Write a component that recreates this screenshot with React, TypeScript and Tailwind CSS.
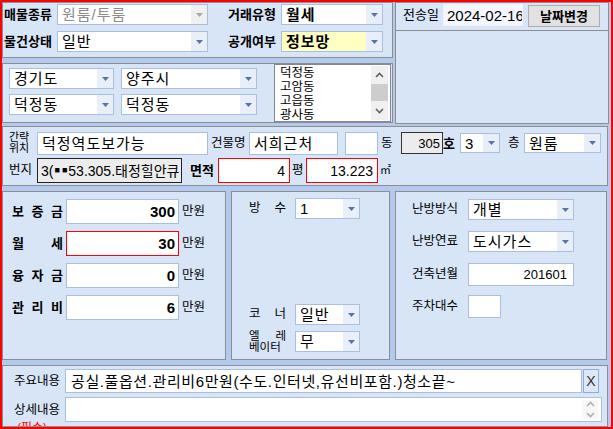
import React from "react";

const LS = "font-['Liberation_Sans','Noto_Sans_CJK_KR',sans-serif]";
const panel = "border border-[#8e8e8e] bg-[#d8e5f7]";

function Tri({ gray = false }: { gray?: boolean }) {
  return (
    <svg width="7" height="4" viewBox="0 0 7 4">
      <path d="M0 0H7L3.5 4Z" fill={gray ? "#a8a8a8" : "#5275ab"} />
    </svg>
  );
}

function Sel({
  cls,
  value,
  textCls = "text-black",
  btnCls = "bg-[#e8eff9]",
  gray = false,
}: {
  cls: string;
  value: string;
  textCls?: string;
  btnCls?: string;
  gray?: boolean;
}) {
  return (
    <div className={`flex shrink-0 border border-[#a9bfdf] bg-white ${cls}`}>
      <div
        className={`flex flex-1 items-center overflow-hidden whitespace-nowrap pl-[4px] text-[15px] leading-none tracking-[1px] ${textCls}`}
      >
        {value}
      </div>
      <div className={`flex w-[16px] items-center justify-center ${btnCls}`}>
        <Tri gray={gray} />
      </div>
    </div>
  );
}

function Inp({ cls, children }: { cls: string; children?: React.ReactNode }) {
  return (
    <div
      className={`flex shrink-0 items-center overflow-hidden whitespace-nowrap border leading-none ${cls}`}
    >
      {children}
    </div>
  );
}

function Chev({ up }: { up: boolean }) {
  return (
    <svg width="9" height="6" viewBox="0 0 9 6">
      <path
        d={up ? "M1 5L4.5 1.5L8 5" : "M1 1L4.5 4.5L8 1"}
        stroke="#606060"
        strokeWidth="1.6"
        fill="none"
      />
    </svg>
  );
}

export default function App() {
  return (
    <div
      className={`flex h-[429px] w-[613px] flex-col overflow-hidden border-2 border-[#ff0000] bg-[#b2caee] text-black ${LS}`}
    >
      {/* Section A */}
      <div className="flex h-[124px] shrink-0 gap-[2px]">
        <div className="flex w-[391px] flex-col">
          {/* A1 */}
          <div className={`${panel} flex h-[56px] flex-col gap-[6px] pl-[1px] pt-[1px]`}>
            <div className="flex h-[21px] items-center">
              <div className="w-[53px] text-[13px] font-bold leading-none">매물종류</div>
              <Sel
                cls="h-[21px] w-[151px]"
                value="원룸/투룸"
                textCls="text-[#8c8c8c]"
                btnCls="bg-[#f0f0f0]"
                gray
              />
              <div className="ml-[20px] w-[53px] text-[13px] font-bold leading-none">거래유형</div>
              <Sel cls="h-[21px] w-[102px]" value="월세" textCls="font-bold" />
            </div>
            <div className="flex h-[21px] items-center">
              <div className="w-[53px] text-[13px] font-bold leading-none">물건상태</div>
              <Sel cls="h-[21px] w-[151px]" value="일반" />
              <div className="ml-[20px] w-[53px] text-[13px] font-bold leading-none">공개여부</div>
              <Sel cls="h-[21px] w-[102px]" value="정보망" textCls="bg-[#ffffc4] font-bold" />
            </div>
          </div>
          {/* A2 */}
          <div className={`${panel} mt-[5px] flex h-[60px]`}>
            <div className="flex flex-col gap-[5px] pl-[6px] pt-[4px]">
              <div className="flex">
                <Sel cls="h-[21px] w-[105px]" value="경기도" />
                <Sel cls="ml-[7px] h-[21px] w-[136px]" value="양주시" />
              </div>
              <div className="flex">
                <Sel cls="h-[21px] w-[105px]" value="덕정동" />
                <Sel cls="ml-[7px] h-[21px] w-[136px]" value="덕정동" />
              </div>
            </div>
            <div className="ml-auto mr-[1px] flex h-[58px] w-[117px] border border-[#828790] bg-white">
              <div className="flex-1 overflow-hidden pl-[5px] pt-[1px] text-[12.5px] leading-[14px]">
                <div>덕정동</div>
                <div>고암동</div>
                <div>고읍동</div>
                <div>광사동</div>
              </div>
              <div className="mr-[2px] mt-[1px] flex h-[54px] w-[17px] flex-col items-center bg-[#f0f0f0]">
                <div className="flex h-[18px] items-center">
                  <Chev up />
                </div>
                <div className="h-[17px] w-[17px] bg-[#cdcdcd]" />
                <div className="flex flex-1 items-center">
                  <Chev up={false} />
                </div>
              </div>
            </div>
          </div>
        </div>
        {/* A3 */}
        <div className={`${panel} flex h-[122px] w-[214px] flex-col`}>
          <div className="flex h-[28px] items-start border-b border-[#8e8e8e] pt-[1px]">
            <div className="ml-[7px] mt-[4px] w-[40px] text-[13px] leading-none">전송일</div>
            <Inp cls="h-[22px] w-[80px] border-[#eef3fb] bg-[#f4f8fe] pl-[3px] text-[15px]">
              2024-02-16
            </Inp>
            <div className="ml-[5px] mt-[1px] flex h-[22px] w-[72px] items-center justify-center border border-[#adadad] bg-[#e1e1e1] text-[13px] font-bold leading-none">
              날짜변경
            </div>
          </div>
        </div>
      </div>

      {/* Section B */}
      <div className={`${panel} flex h-[60px] w-[606px] shrink-0 flex-col pt-[4px]`}>
        <div className="flex h-[24px] items-center">
          <div className="w-[34px] pl-[6px] text-[11px] leading-[11px]">
            <div>간략</div>
            <div>위치</div>
          </div>
          <Inp cls="h-[23px] w-[171px] border-[#a9bfdf] bg-white pl-[4px] text-[15px] tracking-[1px]">
            덕정역도보가능
          </Inp>
          <div className="ml-[3px] w-[38px] text-[12.5px] leading-none">건물명</div>
          <Inp cls="h-[23px] w-[89px] border-[#a9bfdf] bg-white pl-[4px] text-[15px] tracking-[1px]">
            서희근처
          </Inp>
          <Inp cls="ml-[7px] h-[23px] w-[33px] border-[#a9bfdf] bg-white" />
          <div className="ml-[3px] w-[20px] text-[12.5px] leading-none">동</div>
          <Inp cls="h-[22px] w-[42px] justify-end border-[#333333] bg-[#ececec] pr-[2px] text-[13px]">
            305
          </Inp>
          <div className="w-[17px] text-[13px] font-bold leading-none">호</div>
          <Sel cls="h-[20px] w-[40px]" value="3" />
          <div className="ml-[8px] w-[16px] text-[12.5px] leading-none">층</div>
          <Sel cls="h-[20px] w-[77px]" value="원룸" />
        </div>
        <div className="mt-[3px] flex h-[25px] items-center">
          <div className="w-[34px] pl-[6px] text-[12.5px] leading-none">번지</div>
          <Inp cls="h-[25px] w-[145px] border-[#222222] bg-[#ececec] pl-[3px] text-[14px]">
            3(<span className="mx-[1px] text-[9px]">■</span> <span className="mx-[1px] text-[9px]">■</span>53.305.태정힐안큐
          </Inp>
          <div className="ml-[8px] w-[28px] text-[13px] font-bold leading-none">면적</div>
          <Inp cls="h-[25px] w-[72px] justify-end border-[#ff0000] bg-white pr-[4px] text-[14px]">4</Inp>
          <div className="w-[16px] pl-[2px] text-[12.5px] leading-none">평</div>
          <Inp cls="h-[25px] w-[72px] justify-end border-[#ff0000] bg-white pr-[4px] text-[14px]">
            13.223
          </Inp>
          <div className="ml-[2px] text-[11px] leading-none">㎡</div>
        </div>
      </div>

      {/* Section C */}
      <div className="mt-[5px] flex h-[169px] shrink-0 gap-[5px]">
        {/* C1 */}
        <div className={`${panel} flex w-[224px] flex-col gap-[7px] pt-[7px]`}>
          {[
            ["보", "증", "금", "300", false],
            ["월", "", "세", "30", true],
            ["융", "자", "금", "0", false],
            ["관", "리", "비", "6", false],
          ].map((r, i) => (
            <div key={i} className="flex h-[25px] items-center">
              <div className="ml-[9px] flex w-[51px] justify-between text-[13px] font-bold leading-none">
                <span>{r[0] as string}</span>
                <span>{r[1] as string}</span>
                <span>{r[2] as string}</span>
              </div>
              <Inp
                cls={`ml-[3px] h-[25px] w-[113px] justify-end bg-white pr-[3px] text-[15px] font-bold ${
                  r[4] ? "border-[#ff0000]" : "border-[#a9bfdf]"
                }`}
              >
                {r[3] as string}
              </Inp>
              <div className="ml-[3px] text-[12.5px] leading-none">만원</div>
            </div>
          ))}
        </div>
        {/* C2 */}
        <div className={`${panel} flex w-[159px] flex-col pl-[17px]`}>
          <div className="mt-[6px] flex h-[21px] items-center">
            <div className="flex w-[37px] justify-between text-[12.5px] leading-none">
              <span>방</span>
              <span>수</span>
            </div>
            <Sel cls="ml-[9px] h-[21px] w-[65px]" value="1" />
          </div>
          <div className="mt-[85px] flex h-[21px] items-center">
            <div className="flex w-[37px] justify-between text-[12.5px] leading-none">
              <span>코</span>
              <span>너</span>
            </div>
            <Sel cls="ml-[9px] h-[21px] w-[65px]" value="일반" />
          </div>
          <div className="mt-[6px] flex h-[21px] items-center">
            <div className="w-[37px] text-[11.5px] leading-[11px]">
              <div className="flex justify-between">
                <span>엘</span>
                <span>레</span>
              </div>
              <div>베이터</div>
            </div>
            <Sel cls="ml-[9px] h-[21px] w-[65px]" value="무" />
          </div>
        </div>
        {/* C3 */}
        <div className={`${panel} flex w-[212px] flex-col pl-[16px] pt-[7px]`}>
          <div className="flex h-[21px] items-center">
            <div className="w-[56px] text-[12.5px] leading-none">난방방식</div>
            <Sel cls="h-[21px] w-[106px]" value="개별" />
          </div>
          <div className="mt-[11px] flex h-[21px] items-center">
            <div className="w-[56px] text-[12.5px] leading-none">난방연료</div>
            <Sel cls="h-[21px] w-[106px]" value="도시가스" />
          </div>
          <div className="mt-[11px] flex h-[23px] items-center">
            <div className="w-[56px] text-[12.5px] leading-none">건축년월</div>
            <Inp cls="h-[23px] w-[106px] justify-end border-[#a9bfdf] bg-white pr-[6px] text-[13px]">
              201601
            </Inp>
          </div>
          <div className="mt-[9px] flex h-[23px] items-center">
            <div className="w-[56px] text-[12.5px] leading-none">주차대수</div>
            <Inp cls="h-[23px] w-[33px] border-[#a9bfdf] bg-white" />
          </div>
        </div>
      </div>

      {/* Section D */}
      <div className={`${panel} mt-[5px] flex h-[62px] w-[606px] shrink-0 flex-col overflow-hidden pt-[3px]`}>
        <div className="flex h-[24px] items-center">
          <div className="ml-[11px] w-[51px] text-[12.5px] leading-none">주요내용</div>
          <Inp cls="h-[24px] w-[517px] border-[#a9bfdf] bg-white pl-[5px] text-[15px] tracking-[0.6px]">
            공실.풀옵션.관리비6만원(수도.인터넷,유선비포함.)청소끝~
          </Inp>
          <div className="ml-[1px] flex h-[24px] w-[16px] items-center justify-center border border-[#8eaad6] bg-[#dce8f8] text-[14px] leading-none text-[#333333]">
            X
          </div>
        </div>
        <div className="mt-[4px] flex h-[25px] items-start">
          <div className="ml-[11px] flex w-[51px] flex-col pt-[6px]">
            <div className="h-[14px] text-[12.5px] leading-[14px]">상세내용</div>
            <div className="ml-[3px] mt-[4px] text-[12px] leading-[14px] text-[#ff0000]">(필수)</div>
          </div>
          <div className="flex h-[25px] w-[537px] justify-end border border-[#a9bfdf] bg-white pr-[3px]">
            <div className="mt-[2px] flex h-[19px] w-[16px] flex-col items-center justify-between bg-[#f0f0f0] py-[1px] opacity-50">
              <Chev up />
              <Chev up={false} />
            </div>
          </div>
        </div>
      </div>
    </div>
  );
}
